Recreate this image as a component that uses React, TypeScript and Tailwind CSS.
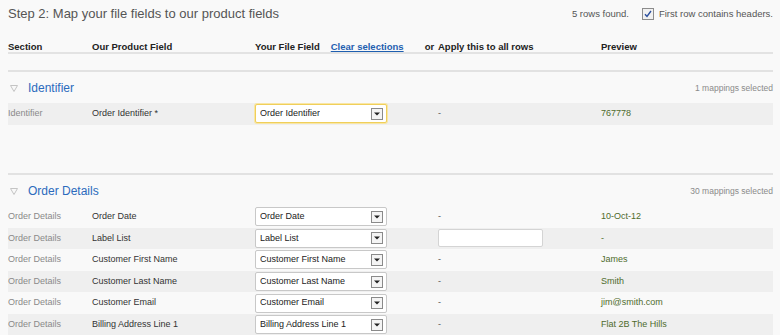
import React from "react";

type Row = {
  section: string;
  field: string;
  file: string;
  apply: "dash" | "input";
  preview: string;
  focused?: boolean;
};

const identifierRows: Row[] = [
  { section: "Identifier", field: "Order Identifier *", file: "Order Identifier", apply: "dash", preview: "767778", focused: true },
];

const orderRows: Row[] = [
  { section: "Order Details", field: "Order Date", file: "Order Date", apply: "dash", preview: "10-Oct-12" },
  { section: "Order Details", field: "Label List", file: "Label List", apply: "input", preview: "-" },
  { section: "Order Details", field: "Customer First Name", file: "Customer First Name", apply: "dash", preview: "James" },
  { section: "Order Details", field: "Customer Last Name", file: "Customer Last Name", apply: "dash", preview: "Smith" },
  { section: "Order Details", field: "Customer Email", file: "Customer Email", apply: "dash", preview: "jim@smith.com" },
  { section: "Order Details", field: "Billing Address Line 1", file: "Billing Address Line 1", apply: "dash", preview: "Flat 2B The Hills" },
];

const FakeSelect = ({ value, focused }: { value: string; focused?: boolean }) => (
  <div
    className={`flex items-center justify-between w-[132px] h-[19px] bg-white rounded-[2px] pl-[4px] pr-[3px] border ${
      focused ? "border-[#f0cf5a] shadow-[0_0_0_1px_#f8e6a6]" : "border-[#c8c8c8]"
    }`}
  >
    <span className="text-[#222] truncate">{value}</span>
    <span className="flex items-center justify-center w-[12px] h-[12px] border border-[#8a8a8a] bg-[#f4f4f4]">
      <svg width="6" height="4" viewBox="0 0 6 4">
        <path d="M0 0.5h6L3 3.5z" fill="#222" />
      </svg>
    </span>
  </div>
);

const MappingRow = ({ row, shaded }: { row: Row; shaded: boolean }) => (
  <div className={`flex items-center h-[21.6px] whitespace-nowrap ${shaded ? "bg-[#efefef]" : ""}`}>
    <div className="w-[84px] text-[#8a8a8a]">{row.section}</div>
    <div className="w-[163px] text-[#333]">{row.field}</div>
    <div className="w-[183px]">
      <FakeSelect value={row.file} focused={row.focused} />
    </div>
    <div className="w-[163px]">
      {row.apply === "input" ? (
        <div className="w-[105px] h-[18px] bg-white border border-[#d4d4d4] rounded-[2px]" />
      ) : (
        <span className="text-[#555]">-</span>
      )}
    </div>
    <div className="text-[#4e6b2c]">{row.preview}</div>
  </div>
);

const SectionBlock = ({
  title,
  count,
  rows,
  shadeFirst,
  height,
}: {
  title: string;
  count: string;
  rows: Row[];
  shadeFirst: boolean;
  height: string;
}) => (
  <section className={`border-t-2 border-[#e2e2e2] ${height}`}>
    <div className="flex items-center justify-between h-[31px] pt-[1px]">
      <div className="flex items-center gap-[10px]">
        <svg width="8" height="7" viewBox="0 0 8 7" className="ml-[2px]">
          <path d="M0.5 0.5h7L4 6.5z" fill="none" stroke="#c4c4c4" strokeWidth="1" />
        </svg>
        <h3 className="text-[12px] text-[#2c6bbd]">{title}</h3>
      </div>
      <span className="text-[8.5px] text-[#8a8a8a]">{count}</span>
    </div>
    {rows.map((r, i) => (
      <MappingRow key={i} row={r} shaded={shadeFirst ? i % 2 === 0 : i % 2 === 1} />
    ))}
  </section>
);

export default function App() {
  return (
    <div className="w-[780px] h-[335px] overflow-hidden bg-[#f9f9f9] pl-[8px] pr-[7px] font-['Liberation_Sans',Arial,sans-serif] text-[9px]">
      {/* Title bar */}
      <div className="flex items-center justify-between h-[28px]">
        <h1 className="text-[13px] text-[#555]">Step 2: Map your file fields to our product fields</h1>
        <div className="flex items-center text-[9.5px] text-[#555]">
          <span>5 rows found.</span>
          <span className="ml-[13px] flex items-center justify-center w-[12px] h-[12px] border border-[#8c8c8c] bg-[#f1f1f1]">
            <svg width="8" height="8" viewBox="0 0 8 8">
              <path d="M1 4.2l2 2.3L7 1" fill="none" stroke="#2b4f9e" strokeWidth="1.4" />
            </svg>
          </span>
          <span className="ml-[5px]">First row contains headers.</span>
        </div>
      </div>

      {/* Column headers */}
      <div className="flex items-end h-[26px] border-b-2 border-[#e3e3e3] font-bold text-[9.5px] leading-[10px] text-[#222] whitespace-nowrap">
        <div className="w-[84px]">Section</div>
        <div className="w-[163px]">Our Product Field</div>
        <div className="w-[183px] flex">
          <span>Your File Field</span>
          <a className="ml-[11px] text-[#1f5fb0] underline">Clear selections</a>
          <span className="ml-[21px]">or</span>
        </div>
        <div className="w-[163px]">Apply this to all rows</div>
        <div>Preview</div>
      </div>

      <div className="h-[16px]" />

      <SectionBlock
        title="Identifier"
        count="1 mappings selected"
        rows={identifierRows}
        shadeFirst
        height="h-[103px]"
      />
      <SectionBlock
        title="Order Details"
        count="30 mappings selected"
        rows={orderRows}
        shadeFirst={false}
        height=""
      />
    </div>
  );
}
